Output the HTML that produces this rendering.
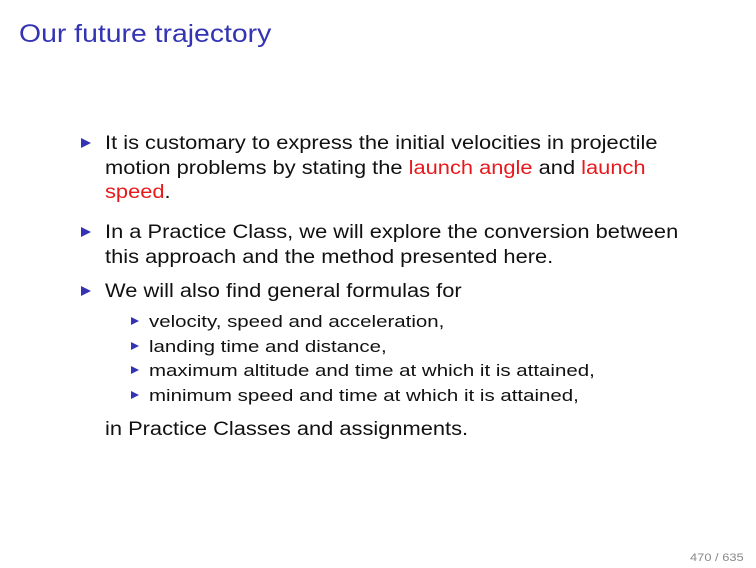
<!DOCTYPE html>
<html><head><meta charset="utf-8"><style>
body{margin:0;width:756px;height:567px;background:#fff;position:relative;overflow:hidden;font-family:"Liberation Sans","DejaVu Sans",sans-serif;color:#111}
.t{position:absolute;white-space:nowrap;line-height:20px;transform-origin:0 50%}
.b{font-size:19px;transform:scaleX(1.15)}
.s{font-size:16.5px;transform:scaleX(1.24)}
.r{color:#e8191c}
.tri{position:absolute;width:0;height:0;border-left:10px solid #3333b3;border-top:5.5px solid transparent;border-bottom:5.5px solid transparent}
.tri.sm{border-left:8px solid #3333b3;border-top:4.5px solid transparent;border-bottom:4.5px solid transparent}
</style></head><body>
<div class="t" style="left:19px;top:19px;font-size:25px;line-height:30px;color:#3333b3;transform:scaleX(1.135)">Our future trajectory</div>

<div class="tri" style="left:81px;top:138px"></div>
<div class="t b" style="left:105px;top:134px">It is customary to express the initial velocities in projectile</div>
<div class="t b" style="left:105px;top:159px">motion problems by stating the <span class="r">launch angle</span> and <span class="r">launch</span></div>
<div class="t b" style="left:105px;top:183px"><span class="r">speed</span>.</div>

<div class="tri" style="left:81px;top:227px"></div>
<div class="t b" style="left:105px;top:223px">In a Practice Class, we will explore the conversion between</div>
<div class="t b" style="left:105px;top:248px">this approach and the method presented here.</div>

<div class="tri" style="left:81px;top:286px"></div>
<div class="t b" style="left:105px;top:282px">We will also find general formulas for</div>

<div class="tri sm" style="left:131px;top:317px"></div>
<div class="t s" style="left:149px;top:312px">velocity, speed and acceleration,</div>
<div class="tri sm" style="left:131px;top:342px"></div>
<div class="t s" style="left:149px;top:337px">landing time and distance,</div>
<div class="tri sm" style="left:131px;top:366px"></div>
<div class="t s" style="left:149px;top:361px">maximum altitude and time at which it is attained,</div>
<div class="tri sm" style="left:131px;top:391px"></div>
<div class="t s" style="left:149px;top:386px">minimum speed and time at which it is attained,</div>

<div class="t b" style="left:105px;top:420px">in Practice Classes and assignments.</div>

<div class="t" style="left:690px;top:548px;font-size:11px;color:#888;transform:scaleX(1.17)">470 / 635</div>
</body></html>
